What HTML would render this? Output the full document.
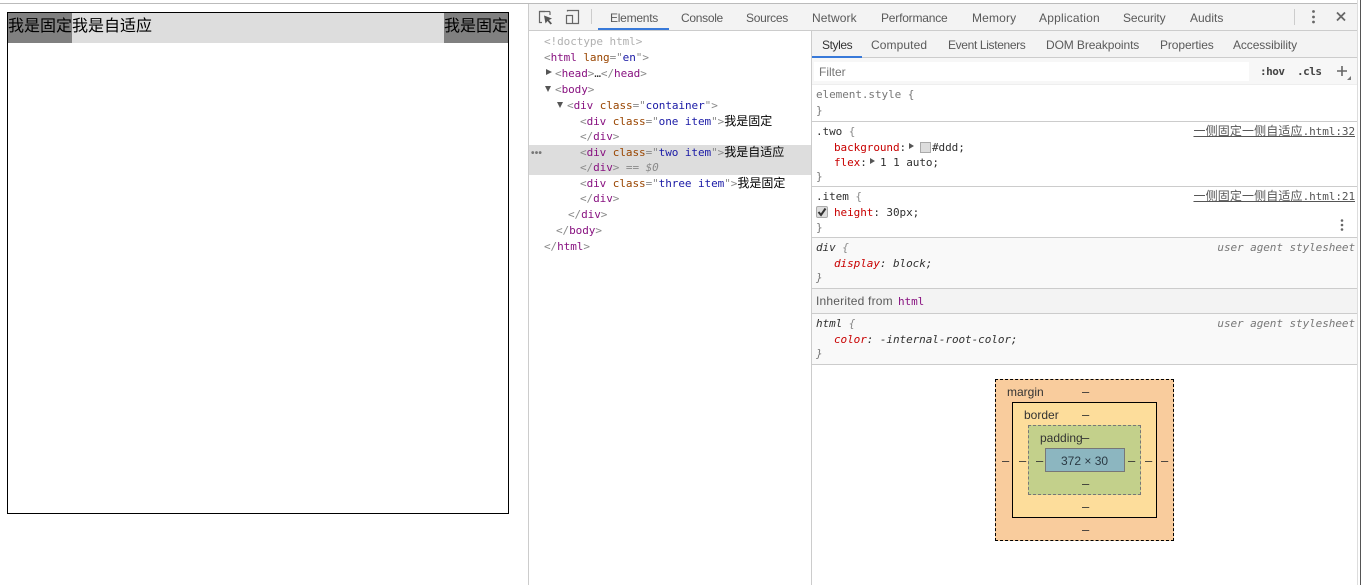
<!DOCTYPE html>
<html lang="zh"><head><meta charset="utf-8"><style>
html,body{margin:0;padding:0;background:#fff}
body{width:1366px;height:585px;position:relative;overflow:hidden;font-family:"Liberation Sans","Noto Sans CJK SC",sans-serif}
.a{position:absolute}
.m,.u{position:absolute;white-space:pre;height:16px;line-height:16px}
.m{font-family:"DejaVu Sans Mono","Liberation Mono","Noto Sans CJK SC",monospace;font-size:11px;letter-spacing:-.07px;color:#303030}
.u{font-size:12px;color:#5a5a5a}
.g{color:#8a8a8a}.t{color:#881280}.n{color:#994500}.v{color:#1a1aa6}
.z{font-family:"Noto Sans CJK SC",sans-serif;font-size:12px;letter-spacing:0;color:#000}
.p{color:#c80000}.i{font-style:italic}
.tr{width:0;height:0;border-style:solid;position:absolute}
.r{border-width:3.5px 0 3.5px 6px;border-color:transparent transparent transparent #555}
.d{border-width:6px 3.5px 0 3.5px;border-color:#555 transparent transparent transparent}
.l{position:absolute;left:812px;width:545px;height:1px;background:#ccc}
.d5{position:absolute;font-size:13px;color:#333;height:12px;line-height:12px;font-family:"Liberation Sans",sans-serif}
.s5{position:absolute;font-size:12px;color:#333;height:14px;line-height:14px;font-family:"Liberation Sans",sans-serif}
.src{position:absolute;white-space:pre;height:16px;line-height:16px;right:11px;font-family:"DejaVu Sans Mono","Noto Sans CJK SC",monospace;font-size:11px;letter-spacing:-.07px;color:#555;text-decoration:underline}
.src b{font-family:"Noto Sans CJK SC",sans-serif;font-weight:400;font-size:12px;letter-spacing:0}
</style></head><body>
<div class="a" style="left:0;top:3px;width:1357px;height:1px;background:#bbb"></div>

<div class="a" style="left:7px;top:12px;width:500px;height:500px;border:1px solid #000"></div>
<div class="a" style="left:8px;top:13px;width:500px;height:30px;background:#ddd"></div>
<div class="a" style="left:8px;top:13px;width:64px;height:30px;background:#808080"></div>
<div class="a" style="left:444px;top:13px;width:64px;height:30px;background:#808080"></div>
<div class="a" style="left:8px;top:12px;height:24px;line-height:24px;font-size:16px;color:#000;white-space:pre;font-family:'Noto Sans CJK SC',sans-serif">我是固定我是自适应</div>
<div class="a" style="left:444px;top:12px;height:24px;line-height:24px;font-size:16px;color:#000;white-space:pre;font-family:'Noto Sans CJK SC',sans-serif">我是固定</div>

<!-- devtools frame -->
<div class="a" style="left:528px;top:4px;width:1px;height:581px;background:#ccc"></div>
<div class="a" style="left:529px;top:4px;width:828px;height:26px;background:#f3f3f3"></div>
<div class="a" style="left:529px;top:30px;width:828px;height:1px;background:#ccc"></div>
<div class="a" style="left:811px;top:31px;width:1px;height:554px;background:#ccc"></div>
<div class="a" style="left:1357px;top:0;width:1px;height:585px;background:#ddd"></div>
<div class="a" style="left:1360px;top:0;width:1px;height:585px;background:#555"></div>

<svg class="a" style="left:536px;top:8px" width="50" height="18" viewBox="0 0 50 18" fill="none">
<path d="M9 3.5H3.5V14.5H6" stroke="#666" stroke-width="1.2"/><path d="M14 3.5V7" stroke="#666" stroke-width="1.2"/><path d="M3.5 3.5H14" stroke="#666" stroke-width="1.2"/>
<path d="M8 7.5L16 10.5L13 12L16 15.5L14.5 16.5L11.5 13L9.5 15.5Z" fill="#555"/>
<path d="M31.5 3.5V2.5H42.5V15.5H37" stroke="#666" stroke-width="1.2"/><rect x="30.5" y="7.5" width="6" height="8" stroke="#666" stroke-width="1.2"/>
</svg>
<div class="a" style="left:591px;top:9px;width:1px;height:15px;background:#ccc"></div>

<div class="u" style="left:610px;top:10px;letter-spacing:-.25px">Elements</div>
<div class="a" style="left:598px;top:28px;width:71px;height:2px;background:#3879d9"></div>
<div class="u" style="left:681px;top:10px;letter-spacing:-.3px">Console</div>
<div class="u" style="left:746px;top:10px;letter-spacing:-.3px">Sources</div>
<div class="u" style="left:812px;top:10px;letter-spacing:.1px">Network</div>
<div class="u" style="left:881px;top:10px;letter-spacing:-.2px">Performance</div>
<div class="u" style="left:972px;top:10px;letter-spacing:.15px">Memory</div>
<div class="u" style="left:1039px;top:10px;letter-spacing:.2px">Application</div>
<div class="u" style="left:1123px;top:10px;letter-spacing:-.1px">Security</div>
<div class="u" style="left:1190px;top:10px">Audits</div>
<div class="a" style="left:1294px;top:9px;width:1px;height:16px;background:#ccc"></div>
<svg class="a" style="left:1308px;top:9px" width="42" height="16" viewBox="0 0 42 16">
<circle cx="5.5" cy="2.5" r="1.4" fill="#666"/><circle cx="5.5" cy="8" r="1.4" fill="#666"/><circle cx="5.5" cy="13" r="1.4" fill="#666"/>
<path d="M29 3.5L37 11.5M37 3.5L29 11.5" stroke="#666" stroke-width="1.8"/></svg>

<!-- DOM tree -->
<div class="a" style="left:529px;top:145px;width:282px;height:30px;background:#ddd"></div>
<div class="a" style="left:531px;top:148px;height:12px;line-height:12px;font-size:10px;letter-spacing:.2px;font-weight:700;color:#777">•••</div>
<div class="m" style="left:544px;top:34px;color:#b0b0b0">&lt;!doctype html&gt;</div>
<div class="m" style="left:544px;top:50px"><span class="g">&lt;</span><span class="t">html</span> <span class="n">lang</span><span class="g">="</span><span class="v">en</span><span class="g">"&gt;</span></div>
<div class="tr r" style="left:546px;top:69px"></div>
<div class="m" style="left:555px;top:66px"><span class="g">&lt;</span><span class="t">head</span><span class="g">&gt;</span>…<span class="g">&lt;/</span><span class="t">head</span><span class="g">&gt;</span></div>
<div class="tr d" style="left:545px;top:86px"></div>
<div class="m" style="left:555px;top:82px"><span class="g">&lt;</span><span class="t">body</span><span class="g">&gt;</span></div>
<div class="tr d" style="left:557px;top:102px"></div>
<div class="m" style="left:567px;top:98px"><span class="g">&lt;</span><span class="t">div</span> <span class="n">class</span><span class="g">="</span><span class="v">container</span><span class="g">"&gt;</span></div>
<div class="m" style="left:580px;top:113px"><span class="g">&lt;</span><span class="t">div</span> <span class="n">class</span><span class="g">="</span><span class="v">one item</span><span class="g">"&gt;</span><span class="z">我是固定</span></div>
<div class="m" style="left:580px;top:129px"><span class="g">&lt;/</span><span class="t">div</span><span class="g">&gt;</span></div>
<div class="m" style="left:580px;top:144px"><span class="g">&lt;</span><span class="t">div</span> <span class="n">class</span><span class="g">="</span><span class="v">two item</span><span class="g">"&gt;</span><span class="z">我是自适应</span></div>
<div class="m" style="left:580px;top:160px"><span class="g">&lt;/</span><span class="t">div</span><span class="g">&gt;</span> <span class="g">==</span> <span class="g i">$0</span></div>
<div class="m" style="left:580px;top:175px"><span class="g">&lt;</span><span class="t">div</span> <span class="n">class</span><span class="g">="</span><span class="v">three item</span><span class="g">"&gt;</span><span class="z">我是固定</span></div>
<div class="m" style="left:580px;top:191px"><span class="g">&lt;/</span><span class="t">div</span><span class="g">&gt;</span></div>
<div class="m" style="left:568px;top:207px"><span class="g">&lt;/</span><span class="t">div</span><span class="g">&gt;</span></div>
<div class="m" style="left:556px;top:223px"><span class="g">&lt;/</span><span class="t">body</span><span class="g">&gt;</span></div>
<div class="m" style="left:544px;top:239px"><span class="g">&lt;/</span><span class="t">html</span><span class="g">&gt;</span></div>

<!-- Styles tabs -->
<div class="a" style="left:812px;top:31px;width:545px;height:26px;background:#f3f3f3"></div>
<div class="a" style="left:812px;top:57px;width:545px;height:1px;background:#ccc"></div>
<div class="a" style="left:812px;top:56px;width:50px;height:2px;background:#3879d9"></div>
<div class="u" style="left:822px;top:37px;color:#333;letter-spacing:-.4px">Styles</div>
<div class="u" style="left:871px;top:37px;letter-spacing:.1px">Computed</div>
<div class="u" style="left:948px;top:37px;letter-spacing:-.35px">Event Listeners</div>
<div class="u" style="left:1046px;top:37px;letter-spacing:-.1px">DOM Breakpoints</div>
<div class="u" style="left:1160px;top:37px;letter-spacing:-.1px">Properties</div>
<div class="u" style="left:1233px;top:37px;letter-spacing:-.1px">Accessibility</div>

<!-- filter -->
<div class="a" style="left:812px;top:58px;width:545px;height:26px;background:#f7f7f7"></div>
<div class="a" style="left:814px;top:62px;width:435px;height:19px;background:#fff"></div>
<div class="u" style="left:819px;top:64px;color:#757575">Filter</div>
<div class="m" style="left:1260px;top:64px;font-weight:700;color:#444;letter-spacing:-.5px">:hov</div>
<div class="m" style="left:1297px;top:64px;font-weight:700;color:#444;letter-spacing:-.5px">.cls</div>
<svg class="a" style="left:1334px;top:63px" width="20" height="20" viewBox="0 0 20 20"><path d="M8 3V13M3 8H13" stroke="#666" stroke-width="1.6"/><path d="M13 17L17 17L17 13Z" fill="#777"/></svg>
<div class="a" style="left:812px;top:84px;width:545px;height:1px;background:#eee"></div>

<!-- rules -->
<div class="m" style="left:816px;top:87px;color:#777">element.style {</div>
<div class="m" style="left:816px;top:103px;color:#777">}</div>
<div class="l" style="top:121px"></div>

<div class="m" style="left:816px;top:124px"><span style="color:#303030">.two</span> <span class="g">{</span></div>
<div class="src" style="top:123px"><b style="letter-spacing:.12px">一侧固定一侧自适应</b>.html:32</div>
<div class="m" style="left:834px;top:140px"><span class="p">background</span>:</div>
<div class="tr r" style="left:909px;top:143px;border-width:3.5px 0 3.5px 5px"></div>
<div class="a" style="left:920px;top:142px;width:9px;height:9px;background:#ddd;border:1px solid #aaa"></div>
<div class="m" style="left:932px;top:140px">#ddd;</div>
<div class="m" style="left:834px;top:155px"><span class="p">flex</span>:</div>
<div class="tr r" style="left:870px;top:158px;border-width:3.5px 0 3.5px 5px"></div>
<div class="m" style="left:880px;top:155px">1 1 auto;</div>
<div class="m" style="left:816px;top:169px;color:#777">}</div>
<div class="l" style="top:186px"></div>

<div class="m" style="left:816px;top:189px"><span>.item</span> <span class="g">{</span></div>
<div class="src" style="top:188px"><b style="letter-spacing:.12px">一侧固定一侧自适应</b>.html:21</div>
<svg class="a" style="left:816px;top:206px" width="13" height="13" viewBox="0 0 13 13"><rect x=".5" y=".5" width="11" height="11" rx="1.5" fill="#ddd" stroke="#aaa"/><path d="M2.5 6L5 9L9.5 2.5" fill="none" stroke="#333" stroke-width="2"/></svg>
<div class="m" style="left:834px;top:205px"><span class="p">height</span>: 30px;</div>
<div class="m" style="left:816px;top:220px;color:#777">}</div>
<svg class="a" style="left:1339px;top:218px" width="6" height="14" viewBox="0 0 6 14"><circle cx="3" cy="2.5" r="1.3" fill="#666"/><circle cx="3" cy="7" r="1.3" fill="#666"/><circle cx="3" cy="11.5" r="1.3" fill="#666"/></svg>
<div class="l" style="top:237px"></div>

<div class="a" style="left:812px;top:238px;width:545px;height:51px;background:#f9f9f9"></div>
<div class="m i" style="left:816px;top:240px">div <span class="g">{</span></div>
<div class="m i" style="right:11px;top:240px;color:#777">user agent stylesheet</div>
<div class="m i" style="left:834px;top:256px"><span class="p">display</span>: block;</div>
<div class="m i" style="left:816px;top:270px;color:#777">}</div>
<div class="l" style="top:288px"></div>

<div class="a" style="left:812px;top:289px;width:545px;height:24px;background:#f3f3f3"></div>
<div class="u" style="left:816px;top:293px;letter-spacing:.2px">Inherited from</div>
<div class="m t" style="left:898px;top:294px;color:#881280">html</div>
<div class="l" style="top:313px"></div>

<div class="a" style="left:812px;top:314px;width:545px;height:50px;background:#f9f9f9"></div>
<div class="m i" style="left:816px;top:316px">html <span class="g">{</span></div>
<div class="m i" style="right:11px;top:316px;color:#777">user agent stylesheet</div>
<div class="m i" style="left:834px;top:332px"><span class="p">color</span>: -internal-root-color;</div>
<div class="m i" style="left:816px;top:346px;color:#777">}</div>
<div class="l" style="top:364px"></div>

<!-- box model -->
<div class="a" style="left:995px;top:379px;width:177px;height:160px;background:#f9cc9d;border:1px dashed #000"></div>
<div class="a" style="left:1012px;top:402px;width:143px;height:114px;background:#fddd9b;border:1px solid #000"></div>
<div class="a" style="left:1028px;top:425px;width:111px;height:68px;background:#c3d08b;border:1px dashed #777"></div>
<div class="a" style="left:1045px;top:448px;width:78px;height:22px;background:#8cb6c0;border:1px solid #777"></div>
<div class="s5" style="left:1007px;top:385px">margin</div>
<div class="s5" style="left:1024px;top:408px">border</div>
<div class="s5" style="left:1040px;top:431px">padding</div>
<div class="s5" style="left:1061px;top:454px;color:#2a3a44">372 × 30</div>
<div class="d5" style="left:1082px;top:386px">–</div>
<div class="d5" style="left:1082px;top:409px">–</div>
<div class="d5" style="left:1082px;top:432px">–</div>
<div class="d5" style="left:1082px;top:478px">–</div>
<div class="d5" style="left:1082px;top:501px">–</div>
<div class="d5" style="left:1082px;top:524px">–</div>
<div class="d5" style="left:1002px;top:455px">–</div>
<div class="d5" style="left:1019px;top:455px">–</div>
<div class="d5" style="left:1036px;top:455px">–</div>
<div class="d5" style="left:1128px;top:455px">–</div>
<div class="d5" style="left:1145px;top:455px">–</div>
<div class="d5" style="left:1161px;top:455px">–</div>
</body></html>
